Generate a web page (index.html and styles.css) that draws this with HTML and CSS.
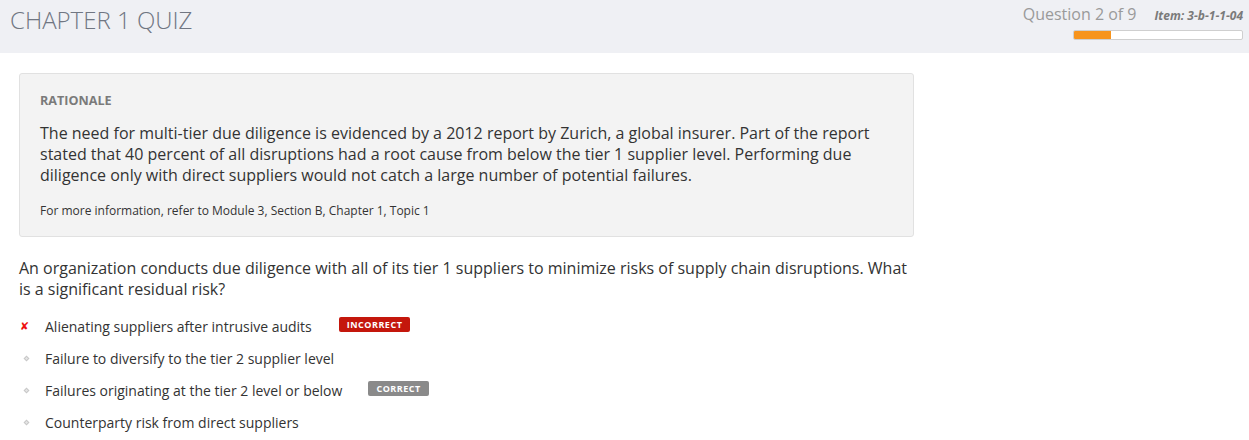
FILE: index.html
```html
<!DOCTYPE html>
<html>
<head>
<meta charset="utf-8">
<link rel="stylesheet" href="styles.css">
</head>
<body>
<header class="topbar">
  <h1 class="title">CHAPTER 1 QUIZ</h1>
  <div class="status">
    <div class="status-line">
      <span class="qcount">Question 2 of 9</span>
      <span class="item">Item: 3-b-1-1-04</span>
    </div>
    <div class="progress"><div class="progress-fill" style="width:22%"></div></div>
  </div>
</header>
<main class="content">
  <section class="rationale">
    <div class="rationale-label">RATIONALE</div>
    <p class="rationale-text">The need for multi-tier due diligence is evidenced by a 2012 report by Zurich, a global insurer. Part of the report stated that 40 percent of all disruptions had a root cause from below the tier 1 supplier level. Performing due diligence only with direct suppliers would not catch a large number of potential failures.</p>
    <p class="rationale-ref">For more information, refer to Module 3, Section B, Chapter 1, Topic 1</p>
  </section>
  <p class="question">An organization conducts due diligence with all of its tier 1 suppliers to minimize risks of supply chain disruptions. What is a significant residual risk?</p>
  <ul class="options">
    <li class="option"><span class="mark mark-x">✘</span><span class="opt-text">Alienating suppliers after intrusive audits</span><span class="badge badge-incorrect">INCORRECT</span></li>
    <li class="option"><span class="mark mark-dot"><svg width="7" height="7" viewBox="0 0 7 7"><path d="M3.5 0.5 L6.5 3.5 L3.5 6.5 L0.5 3.5 Z" fill="#c8c8c8"/><path d="M3.5 2 L5 3.5 L3.5 5 L2 3.5 Z" fill="#e6e6e6"/></svg></span><span class="opt-text">Failure to diversify to the tier 2 supplier level</span></li>
    <li class="option"><span class="mark mark-dot"><svg width="7" height="7" viewBox="0 0 7 7"><path d="M3.5 0.5 L6.5 3.5 L3.5 6.5 L0.5 3.5 Z" fill="#c8c8c8"/><path d="M3.5 2 L5 3.5 L3.5 5 L2 3.5 Z" fill="#e6e6e6"/></svg></span><span class="opt-text">Failures originating at the tier 2 level or below</span><span class="badge badge-correct">CORRECT</span></li>
    <li class="option"><span class="mark mark-dot"><svg width="7" height="7" viewBox="0 0 7 7"><path d="M3.5 0.5 L6.5 3.5 L3.5 6.5 L0.5 3.5 Z" fill="#c8c8c8"/><path d="M3.5 2 L5 3.5 L3.5 5 L2 3.5 Z" fill="#e6e6e6"/></svg></span><span class="opt-text">Counterparty risk from direct suppliers</span></li>
  </ul>
</main>
</body>
</html>
```
FILE: styles.css
```css
* { box-sizing: border-box; }
body {
  margin: 0;
  font-family: "Open Sans", "Noto Sans", sans-serif;
  background: #ffffff;
  color: #333;
}
.topbar {
  background: #eff0f4;
  height: 53px;
  display: flex;
  justify-content: space-between;
  align-items: flex-start;
  padding: 0 6px 0 10px;
}
.title {
  margin: 5px 0 0;
  font-weight: 300;
  font-size: 24px;
  line-height: 30px;
  color: #707682;
  letter-spacing: 0;
}
.status {
  display: flex;
  flex-direction: column;
  align-items: flex-end;
  padding-top: 3px;
}
.status-line {
  display: flex;
  align-items: baseline;
  gap: 18px;
}
.qcount {
  font-size: 16px;
  color: #9a9a9a;
  line-height: 22px;
}
.item {
  font-size: 12px;
  font-weight: 700;
  font-style: italic;
  color: #7a7a7a;
  letter-spacing: 0;
}
.progress {
  margin-top: 5px;
  width: 170px;
  height: 10px;
  border: 1px solid #cfcfcf;
  border-radius: 2px;
  background: #fff;
  overflow: hidden;
}
.progress-fill {
  height: 100%;
  background: #f7941d;
}
.content {
  width: 895px;
  margin-left: 19px;
  padding-top: 20px;
}
.rationale {
  background: #f3f3f3;
  border: 1px solid #e1e1e1;
  border-radius: 3px;
  padding: 18px 20px 17px;
}
.rationale-label {
  font-size: 12.6px;
  font-weight: 700;
  color: #7a7a7a;
  line-height: 17px;
}
.rationale-text {
  margin: 14px 0 0;
  font-size: 16px;
  line-height: 21px;
  color: #333;
}
.rationale-ref {
  margin: 16px 0 0;
  font-size: 12px;
  line-height: 17px;
  color: #333;
}
.question {
  margin: 21px 0 0;
  font-size: 16px;
  line-height: 21px;
  color: #333;
}
.options {
  list-style: none;
  margin: 10px 0 0;
  padding: 0;
}
.option {
  display: flex;
  align-items: center;
  height: 32px;
  font-size: 14px;
  color: #333;
}
.mark {
  width: 26px;
  display: flex;
  align-items: center;
}
.mark-x {
  color: #ee1111;
  font-size: 11px;
  font-style: italic;
  font-family: "DejaVu Sans", sans-serif;
  padding-left: 1px;
}
.mark-dot { padding-left: 4px; }
.badge {
  display: inline-block;
  font-size: 9px;
  font-weight: 700;
  letter-spacing: 0.5px;
  color: #fff;
  line-height: 15px;
  padding: 0 8px;
  border-radius: 2px;
  margin-top: -4px;
}
.badge-incorrect { background: #c4170c; margin-left: 27px; }
.badge-correct { background: #8a8a8a; margin-left: 26px; }
```
